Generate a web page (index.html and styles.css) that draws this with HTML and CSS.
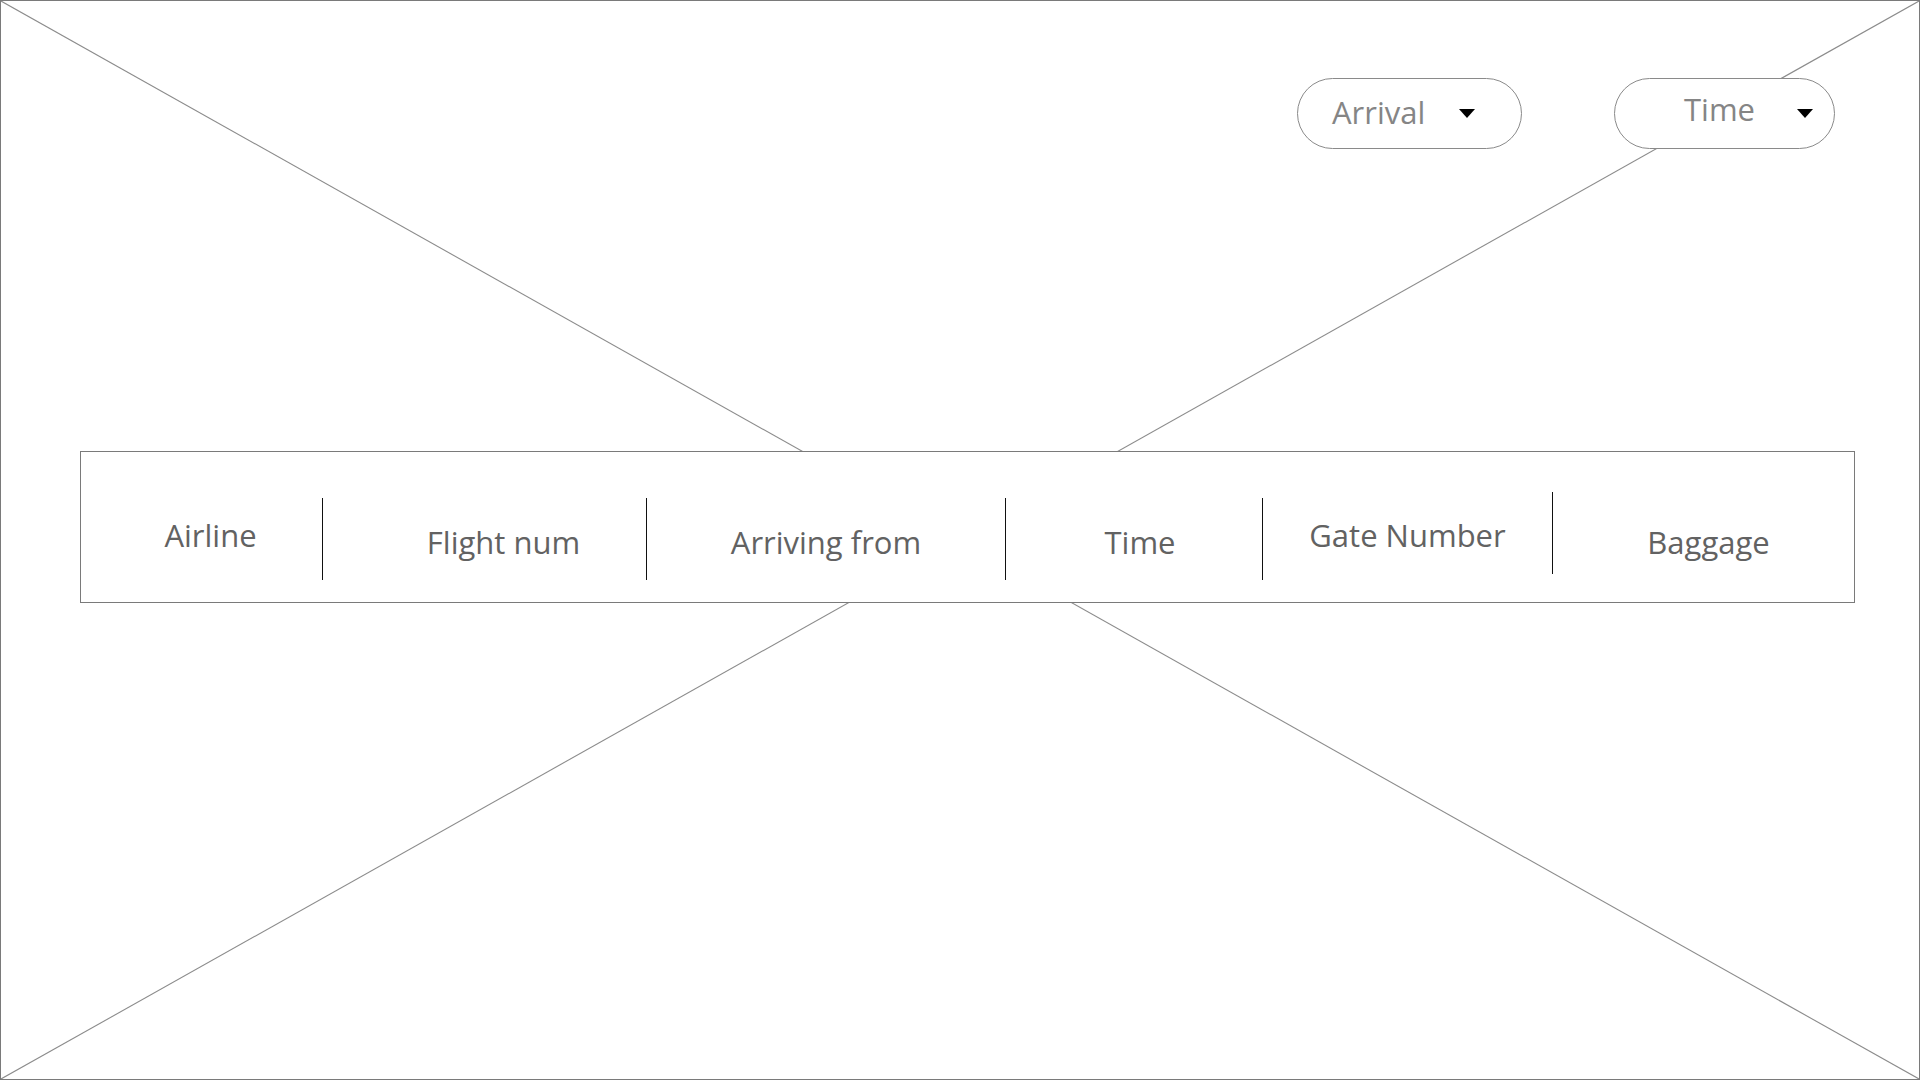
FILE: index.html
```html
<!DOCTYPE html>
<html lang="en">
<head>
<meta charset="utf-8">
<title>Arrivals wireframe</title>
<link rel="stylesheet" href="styles.css">
</head>
<body>
<div class="frame">
  <svg class="placeholder" viewBox="0 0 1920 1080" preserveAspectRatio="none" aria-hidden="true">
    <line x1="0" y1="0" x2="1920" y2="1080" />
    <line x1="1920" y1="0" x2="0" y2="1080" />
  </svg>
  <div class="content">
    <div class="filters">
      <div class="pill pill-arrival"><span class="pill-label">Arrival</span><span class="caret caret-arrival"></span></div>
      <div class="pill pill-time"><span class="pill-label pill-label-time">Time</span><span class="caret caret-time"></span></div>
    </div>
    <div class="board">
      <div class="cell cell-airline"><span class="label label-up">Airline</span></div>
      <div class="divider"></div>
      <div class="cell cell-flight"><span class="label label-flight">Flight num</span></div>
      <div class="divider"></div>
      <div class="cell cell-from"><span class="label">Arriving from</span></div>
      <div class="divider"></div>
      <div class="cell cell-time"><span class="label label-time">Time</span></div>
      <div class="divider"></div>
      <div class="cell cell-gate"><span class="label label-up">Gate Number</span></div>
      <div class="divider divider-high"></div>
      <div class="cell cell-baggage"><span class="label">Baggage</span></div>
    </div>
  </div>
</div>
</body>
</html>
```

FILE: styles.css
```css
html, body {
  margin: 0;
  padding: 0;
  background: #ffffff;
}

.frame {
  position: relative;
  width: 1920px;
  height: 1080px;
  box-sizing: border-box;
  border: 1px solid #7a7a7a;
  overflow: hidden;
  font-family: "Open Sans", "Noto Sans", sans-serif;
}

.placeholder {
  position: absolute;
  left: 0;
  top: 0;
  width: 100%;
  height: 100%;
}

.placeholder line {
  stroke: #8c8c8c;
  stroke-width: 1.1;
}

.content {
  position: relative;
  display: flex;
  flex-direction: column;
}

.filters {
  display: flex;
  justify-content: flex-end;
  gap: 92px;
  padding-top: 77px;
  padding-right: 84px;
}

.pill {
  display: flex;
  align-items: center;
  box-sizing: border-box;
  height: 71px;
  border: 1px solid #8a8a8a;
  border-radius: 36px;
  background: #ffffff;
  color: #858585;
  font-size: 31px;
}

.pill-arrival {
  width: 225px;
  padding-left: 34px;
}

.pill-time {
  width: 221px;
  padding-left: 69px;
}

.pill-label {
  line-height: 1;
  position: relative;
  top: -1px;
}

.pill-label-time {
  top: -4px;
}

.caret {
  width: 0;
  height: 0;
  border-left: 8px solid transparent;
  border-right: 8px solid transparent;
  border-top: 9px solid #000000;
}

.caret-arrival {
  margin-left: 34px;
}

.caret-time {
  margin-left: 42px;
}

.board {
  display: flex;
  align-items: flex-start;
  box-sizing: border-box;
  margin-top: 302px;
  margin-left: 79px;
  width: 1775px;
  height: 152px;
  border: 1px solid #7a7a7a;
  background: #ffffff;
  color: #626262;
  font-size: 31px;
}

.cell {
  display: flex;
  justify-content: center;
  flex: none;
  height: 100%;
  box-sizing: border-box;
  padding-top: 72px;
}

.label {
  line-height: 1.2;
}

.label-up {
  position: relative;
  top: -7px;
}

.label-flight {
  position: relative;
  left: 19px;
}

.label-time {
  position: relative;
  left: 6px;
}

.cell-airline { width: 241px; padding-left: 18px; }
.cell-flight { width: 323px; }
.cell-from { width: 358px; }
.cell-time { width: 256px; }
.cell-gate { width: 289px; }
.cell-baggage { flex: 1; padding-left: 10px; }

.divider {
  flex: none;
  width: 1px;
  height: 82px;
  margin-top: 46px;
  background: #111111;
}

.divider-high {
  margin-top: 40px;
}
```
